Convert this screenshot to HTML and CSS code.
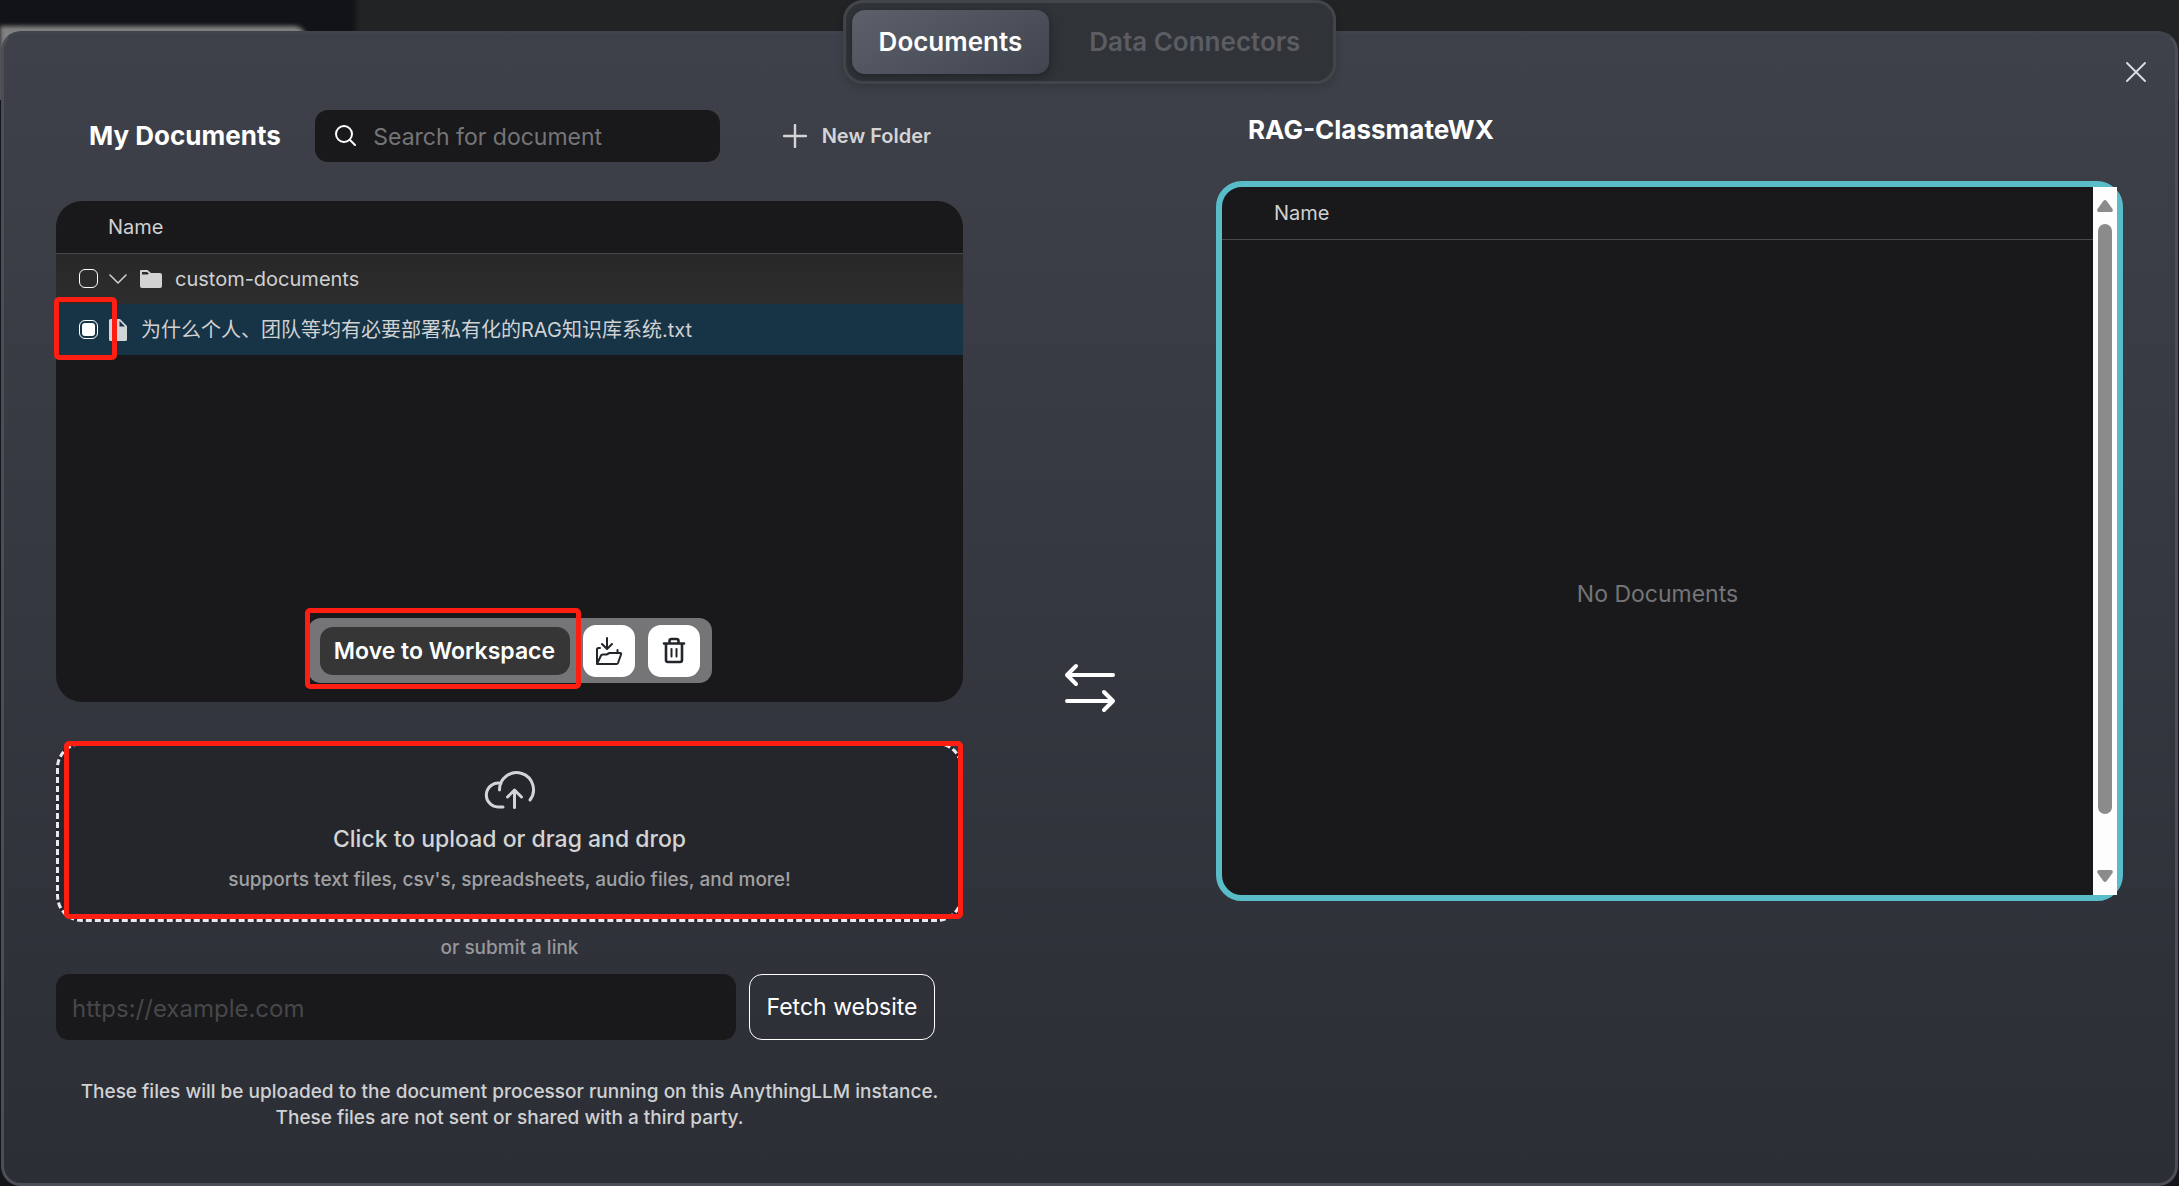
FILE: index.html
```html
<!DOCTYPE html>
<html lang="en">
<head>
<meta charset="utf-8">
<meta name="viewport" content="width=device-width, initial-scale=1">
<title>Documents</title>
<link rel="stylesheet" href="styles.css">
</head>
<body>
<div class="backdrop" aria-hidden="true"><div class="backdrop-sidebar"></div></div>

<nav class="tabs" aria-label="Document sources">
  <button class="tab tab-active" type="button">Documents</button>
  <button class="tab" type="button">Data Connectors</button>
</nav>

<main class="modal">
  <button class="close" type="button" aria-label="Close">
    <svg width="20" height="20" viewBox="0 0 20 20" fill="none" stroke="#dcdfe6" stroke-width="1.800" stroke-linecap="round"><path d="M1 1L19 19M19 1L1 19"/></svg>
  </button>

  <section class="column">
    <header class="toolbar">
      <h2 class="title">My Documents</h2>
      <label class="search">
        <svg width="22" height="22" viewBox="0 0 22 22" fill="none" stroke="#fff" stroke-width="2" stroke-linecap="round"><circle cx="9" cy="9" r="8"/><path d="M15 15L20 20"/></svg>
        <input class="search-input" type="search" placeholder="Search for document" aria-label="Search for document">
      </label>
      <button class="new-folder" type="button">
        <svg width="24" height="24" viewBox="0 0 24 24" fill="none" stroke="#d3d4d6" stroke-width="2.400" stroke-linecap="round"><path d="M12 1V23M1 12H23"/></svg>
        New Folder
      </button>
    </header>

    <div class="panel">
      <table class="files">
        <thead><tr><th class="files-head">Name</th></tr></thead>
        <tbody>
          <tr class="row-folder"><td class="cell">
            <div class="cell-inner">
              <input class="check" type="checkbox" aria-label="Select custom-documents">
              <svg class="caret" width="18" height="12" viewBox="0 0 18 12" fill="none" stroke="#d3d3d3" stroke-width="1.500" stroke-linecap="round" stroke-linejoin="round"><path d="M1 2L9 10L17 2"/></svg>
              <svg class="folder-icon" width="24" height="20" viewBox="0 0 24 20" fill="#d3d3d3"><path fill-rule="evenodd" d="M2 1H8.500L12 4H21Q23 4 23 6V17Q23 19 21 19H3Q1 19 1 17V2Q1 1 2 1ZM3 3V5.500H8.500L10 4.500L8 3Z"/></svg>
              <span>custom-documents</span>
            </div>
          </td></tr>
          <tr class="row-selected"><td class="cell">
            <div class="cell-inner">
              <input class="check" type="checkbox" checked aria-label="Select file">
              <svg class="file-icon" width="18" height="22" viewBox="0 0 18 22" fill="#d0d5d8"><path fill-rule="evenodd" d="M1.500 0H11L18 7V20.500Q18 22 16.500 22H1.500Q0 22 0 20.500V1.500Q0 0 1.500 0ZM10.500 2V7.500H16Z"/></svg>
              <span class="file-name" lang="zh-CN">为什么个人、团队等均有必要部署私有化的RAG知识库系统.txt</span>
            </div>
            <span class="mark mark-check"></span>
          </td></tr>
        </tbody>
      </table>

      <div class="actions">
        <button class="move" type="button">Move to Workspace</button>
        <button class="icon-button" type="button" aria-label="Move to folder">
          <svg width="28" height="30" viewBox="0 0 28 30" fill="none" stroke="#22262a" stroke-width="2" stroke-linecap="round" stroke-linejoin="round"><path d="M12 2V12M7 8L12 13L17 8M5 12H3.500Q2 12 2 13.500V28L6 19.500Q6.500 18.500 7.500 18.500H11.500L14.500 17H25Q26.500 17 26 18.500L23 27Q22.600 28 21.500 28H2M22.500 17V14"/></svg>
        </button>
        <button class="icon-button" type="button" aria-label="Delete">
          <svg width="24" height="27" viewBox="0 0 24 27" fill="none" stroke="#22262a" stroke-width="2.600" stroke-linecap="round" stroke-linejoin="round"><path d="M2 6.500H22M4 6.500V23Q4 25 6 25H18Q20 25 20 23V6.500M7.500 6V4Q7.500 2 9.500 2H14.500Q16.500 2 16.500 4V6"/><path d="M9.500 12V19.500M14.500 12V19.500" stroke-width="2"/></svg>
        </button>
        <span class="mark mark-move"></span>
      </div>
    </div>

    <div class="drop">
      <svg width="52" height="38" viewBox="0 0 52 38" fill="none" stroke="#d3d4d5" stroke-width="3" stroke-linecap="round" stroke-linejoin="round"><path d="M19 36H14A12 12 0 1 1 17 12.300M15.500 19A17 17 0 1 1 46 29M30.500 36.500V19.500M23.500 26L30.500 19L37.500 26"/></svg>
      <p class="drop-title">Click to upload or drag and drop</p>
      <p class="drop-note">supports text files, csv's, spreadsheets, audio files, and more!</p>
      <span class="mark mark-drop"></span>
    </div>

    <p class="or-link">or submit a link</p>

    <form class="link-form">
      <input class="link-input" type="url" placeholder="https://example.com" aria-label="Website link">
      <button class="fetch" type="button">Fetch website</button>
    </form>

    <p class="disclaimer">These files will be uploaded to the document processor running on this AnythingLLM instance.<br>These files are not sent or shared with a third party.</p>
  </section>

  <div class="transfer" aria-hidden="true">
    <svg width="52" height="52" viewBox="0 0 52 52" fill="none" stroke="#fff" stroke-width="4" stroke-linecap="round" stroke-linejoin="round"><path d="M49 13H3M12 4L3 13L12 22M3 39H49M40 30L49 39L40 48"/></svg>
  </div>

  <section class="column">
    <h2 class="title title-workspace">RAG-ClassmateWX</h2>
    <div class="workspace">
      <div class="workspace-body">
        <div class="workspace-head">Name</div>
        <p class="empty">No Documents</p>
      </div>
      <div class="scrollbar" aria-hidden="true">
        <svg width="16" height="12" viewBox="0 0 16 12" fill="#8b8b8b"><path d="M6.300 1Q8-1 9.700 1L15.500 9Q16.500 12 14 12H2Q-0.500 12 0.500 9Z"/></svg>
        <div class="scroll-track"><div class="scroll-thumb"></div></div>
        <svg width="16" height="12" viewBox="0 0 16 12" fill="#8b8b8b"><path d="M6.300 11Q8 13 9.700 11L15.500 3Q16.500 0 14 0H2Q-0.500 0 0.500 3Z"/></svg>
      </div>
    </div>
  </section>
</main>
</body>
</html>
```
FILE: styles.css
```css
* { box-sizing: border-box; }

body {
  margin: 0;
  min-height: 100vh;
  display: flex;
  flex-direction: column;
  position: relative;
  padding: 31px 1px 0;
  background: #141519;
  color: #fff;
  font-family: Inter, "Noto Sans CJK SC", sans-serif;
  font-size: 20px;
  line-height: 26px;
}

h2, p { margin: 0; }

button, input { font: inherit; }

button {
  border: 0;
  padding: 0;
  background: none;
  color: inherit;
  cursor: pointer;
}

/* Dimmed application behind the dialog */
.backdrop {
  position: absolute;
  inset: 0 0 auto 0;
  height: 100px;
  overflow: hidden;
  background: linear-gradient(90deg, #121317 352px, #212324 360px);
}

.backdrop-sidebar {
  width: 306px;
  height: 100px;
  margin-top: 26px;
  border-radius: 0 12px 0 0;
  background: #828282;
  filter: blur(2px);
}

.tabs {
  position: absolute;
  z-index: 2;
  top: 0;
  left: 50%;
  transform: translateX(-50%);
  display: flex;
  gap: 13px;
  padding: 7px 6px;
  border: 3px solid #42454a;
  border-radius: 20px;
  background: #303338;
  box-shadow: 0 4px 8px rgba(0, 0, 0, 0.15);
}

.tab {
  height: 64px;
  padding: 0 27px;
  border-radius: 13px;
  color: #5b5d62;
  font-size: 26px;
  font-weight: 600;
  white-space: nowrap;
}

.tab-active {
  background: linear-gradient(150deg, #5b606a, #41454f);
  box-shadow: 0 3px 8px rgba(0, 0, 0, 0.3);
  color: #fff;
}

.modal {
  position: relative;
  flex: 1;
  display: grid;
  grid-template-columns: minmax(0, 907fr) minmax(0, 253fr) minmax(0, 907fr);
  padding: 76px 52px 40px;
  border: 3px solid #4b4e56;
  border-top-color: #3f434b;
  border-radius: 20px;
  background: linear-gradient(180deg, #3e4149, #2c2e36);
}

.close {
  position: absolute;
  top: 28px;
  right: 29px;
  width: 20px;
  height: 20px;
  display: flex;
}

.toolbar {
  display: flex;
  align-items: center;
  justify-content: space-between;
  height: 52px;
  margin-bottom: 39px;
  padding: 0 32px 0 33px;
}

.title {
  font-size: 26px;
  font-weight: 700;
  white-space: nowrap;
}

.search {
  display: flex;
  align-items: center;
  gap: 16px;
  width: 405px;
  height: 52px;
  padding: 0 20px;
  border-radius: 13px;
  background: #19191b;
}

.search-input {
  flex: 1;
  min-width: 0;
  border: 0;
  padding: 2px 0 0;
  background: none;
  color: #fff;
  font-size: 23px;
  appearance: none;
}

.search-input::placeholder { color: #757578; opacity: 1; }

.new-folder {
  display: flex;
  align-items: center;
  gap: 15px;
  margin-left: 28px;
  color: #d3d4d6;
  font-weight: 600;
  white-space: nowrap;
}

.panel {
  position: relative;
  min-height: 501px;
  border-radius: 26px;
  background: #19191b;
}

.files {
  width: 100%;
  border-collapse: collapse;
  color: #d0d1d2;
}

.files-head {
  height: 52px;
  padding: 0 52px;
  border-bottom: 1px solid #47484b;
  font-weight: 400;
  text-align: left;
}

.cell {
  position: relative;
  height: 51px;
  padding: 0 23px;
}

.cell-inner { display: flex; align-items: center; }

.row-folder { background: linear-gradient(180deg, #282828, #2d2d2d); }
.row-selected { background: #173446; }

.check {
  appearance: none;
  width: 19px;
  height: 19px;
  margin: 0 11px 0 0;
  padding: 2px;
  border: 1px solid #fff;
  border-radius: 6px;
  background-clip: content-box;
}

.check:checked { background-color: #fff; }

.caret { margin-right: 12px; }
.folder-icon { margin-right: 12px; }
.file-icon { margin-right: 14px; }
.file-name { white-space: nowrap; }

/* Highlight frames */
.mark {
  position: absolute;
  border: 5px solid #ff1e12;
  border-radius: 5px;
  pointer-events: none;
}

.mark-check { left: -2px; top: -7px; width: 63px; height: 63px; }
.mark-move { left: -3px; top: -10px; width: 276px; height: 81px; }
.mark-drop { inset: -4px -3px 0 5px; }

.actions {
  position: absolute;
  left: 50%;
  bottom: 19px;
  transform: translateX(-50%);
  display: flex;
  align-items: center;
  gap: 13px;
  height: 65px;
  padding: 0 12px;
  border-radius: 13px;
  background: #757578;
}

.move {
  width: 250px;
  height: 48px;
  border-radius: 13px;
  background: #363636;
  font-size: 23px;
  font-weight: 600;
  white-space: nowrap;
}

.icon-button {
  display: flex;
  align-items: center;
  justify-content: center;
  width: 52px;
  height: 52px;
  border-radius: 13px;
  background: #fff;
}

.drop {
  position: relative;
  display: flex;
  flex-direction: column;
  align-items: center;
  margin-top: 40px;
  padding: 26px 20px 26px;
  border: 3px dashed #e8eaf0;
  border-radius: 26px;
  background: #25262b;
  text-align: center;
}

.drop-title {
  margin-top: 17px;
  color: #d3d4d5;
  font-size: 23px;
  font-weight: 500;
}

.drop-note {
  margin-top: 15px;
  color: #a0a1a3;
  font-size: 19px;
  font-weight: 500;
}

.or-link {
  margin: 13px 0;
  color: #97989b;
  font-size: 19px;
  font-weight: 500;
  text-align: center;
}

.link-form {
  display: flex;
  gap: 13px;
  padding-right: 28px;
}

.link-input {
  flex: 1;
  min-width: 0;
  height: 66px;
  padding: 2px 16px 0;
  border: 0;
  border-radius: 13px;
  background: #19191b;
  color: #fff;
  font-size: 24px;
}

.link-input::placeholder { color: #47474a; opacity: 1; }

.fetch {
  width: 186px;
  height: 66px;
  border: 1px solid #fff;
  border-radius: 13px;
  font-size: 23px;
  white-space: nowrap;
}

.disclaimer {
  margin-top: 39px;
  color: #d0d1d2;
  font-size: 19px;
  font-weight: 500;
  text-align: center;
}

.transfer {
  display: flex;
  justify-content: center;
  padding-top: 552px;
}

.title-workspace {
  margin: 7px 32px 38px;
}

.workspace {
  display: flex;
  height: 720px;
  border: 6px solid #58bdc9;
  border-radius: 26px;
  background: #19191b;
}

.workspace-body {
  flex: 1;
  display: flex;
  flex-direction: column;
}

.workspace-head {
  height: 53px;
  padding: 13px 52px;
  border-bottom: 1px solid #47484b;
  color: #d0d1d2;
}

.empty {
  margin: auto;
  padding-top: 52px;
  color: #757578;
  font-size: 23px;
}

.scrollbar {
  display: flex;
  flex-direction: column;
  align-items: center;
  gap: 12px;
  width: 24px;
  padding: 13px 0;
  background: #fdfdfd;
}

.scroll-track { flex: 1; }

.scroll-thumb {
  width: 14px;
  height: 93%;
  border-radius: 7px;
  background: #8b8b8b;
}
```
